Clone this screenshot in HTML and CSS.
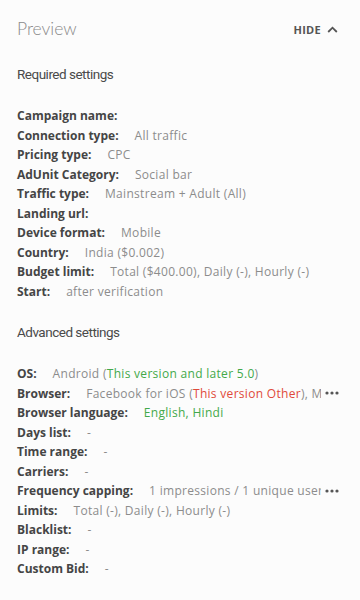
FILE: index.html
```html
<!DOCTYPE html>
<html>
<head>
<meta charset="utf-8">
<link rel="stylesheet" href="styles.css">
</head>
<body>
<div class="panel">
  <div class="header">
    <div class="title">Preview</div>
    <div class="hide">HIDE
      <svg class="chev" width="11" height="7" viewBox="0 0 11 7"><path d="M1.2 6 L5.5 1.7 L9.8 6" fill="none" stroke="#555" stroke-width="1.8"/></svg>
    </div>
  </div>

  <div class="section-title first">Required settings</div>
  <div class="rows">
    <div class="row"><span class="label">Campaign name:</span></div>
    <div class="row"><span class="label">Connection type:</span><span class="value">All traffic</span></div>
    <div class="row"><span class="label">Pricing type:</span><span class="value">CPC</span></div>
    <div class="row"><span class="label">AdUnit Category:</span><span class="value">Social bar</span></div>
    <div class="row"><span class="label">Traffic type:</span><span class="value">Mainstream + Adult (All)</span></div>
    <div class="row"><span class="label">Landing url:</span></div>
    <div class="row"><span class="label">Device format:</span><span class="value">Mobile</span></div>
    <div class="row"><span class="label">Country:</span><span class="value">India ($0.002)</span></div>
    <div class="row"><span class="label">Budget limit:</span><span class="value">Total ($400.00), Daily (-), Hourly (-)</span></div>
    <div class="row"><span class="label">Start:</span><span class="value">after verification</span></div>
  </div>

  <div class="section-title">Advanced settings</div>
  <div class="rows">
    <div class="row"><span class="label">OS:</span><span class="value">Android (<span class="ok">This version and later 5.0</span>)</span></div>
    <div class="row"><span class="label">Browser:</span><span class="value clip">Facebook for iOS (<span class="bad">This version Other</span>), Mobile Safari</span><svg class="more" width="14" height="4" viewBox="0 0 14 4"><circle cx="2" cy="2" r="1.6"/><circle cx="7" cy="2" r="1.6"/><circle cx="12" cy="2" r="1.6"/></svg></div>
    <div class="row"><span class="label">Browser language:</span><span class="value ok">English, Hindi</span></div>
    <div class="row"><span class="label">Days list:</span><span class="value">-</span></div>
    <div class="row"><span class="label">Time range:</span><span class="value">-</span></div>
    <div class="row"><span class="label">Carriers:</span><span class="value">-</span></div>
    <div class="row"><span class="label">Frequency capping:</span><span class="value clip">1 impressions / 1 unique user per 24 hours</span><svg class="more" width="14" height="4" viewBox="0 0 14 4"><circle cx="2" cy="2" r="1.6"/><circle cx="7" cy="2" r="1.6"/><circle cx="12" cy="2" r="1.6"/></svg></div>
    <div class="row"><span class="label">Limits:</span><span class="value">Total (-), Daily (-), Hourly (-)</span></div>
    <div class="row"><span class="label">Blacklist:</span><span class="value">-</span></div>
    <div class="row"><span class="label">IP range:</span><span class="value">-</span></div>
    <div class="row"><span class="label">Custom Bid:</span><span class="value">-</span></div>
  </div>
</div>
</body>
</html>
```

FILE: styles.css
```css
html, body {
  margin: 0;
  padding: 0;
  background: #fcfcfc;
}
body {
  font-family: "Open Sans", "Liberation Sans", sans-serif;
  color: #4a4a4a;
}
.panel {
  width: 360px;
  box-sizing: border-box;
  padding: 18px 21px 0 17px;
}
.header {
  display: flex;
  align-items: center;
  justify-content: space-between;
  height: 22px;
}
.title {
  font-family: Lato, sans-serif;
  font-weight: 300;
  font-size: 17.5px;
  color: #8a8a8a;
  line-height: 22px;
}
.hide {
  display: flex;
  align-items: center;
  font-family: "Open Sans", sans-serif;
  font-weight: 700;
  font-size: 11px;
  letter-spacing: 0.3px;
  color: #555;
  margin-right: 1px;
}
.chev {
  margin-left: 6px;
}
.section-title {
  font-family: Roboto, sans-serif;
  font-size: 13.5px;
  letter-spacing: -0.5px;
  color: #4a4a4a;
  line-height: 18px;
  margin-top: 22px;
}
.section-title.first {
  margin-top: 25px;
}
.rows {
  margin-top: 23px;
}
.row {
  display: flex;
  align-items: center;
  height: 19.5px;
  line-height: 19.5px;
  font-size: 12px;
  white-space: nowrap;
}
.label {
  flex: none;
  font-weight: 700;
  color: #454545;
  margin-right: 16px;
}
.value {
  min-width: 0;
  color: #8c8c8c;
  letter-spacing: 0.3px;
}
.value.clip {
  overflow: hidden;
  flex: 1 1 auto;
}
.more {
  flex: none;
  margin-left: 4px;
  fill: #555;
}
.ok {
  color: #43a94a;
}
.bad {
  color: #e04a3a;
}
```
